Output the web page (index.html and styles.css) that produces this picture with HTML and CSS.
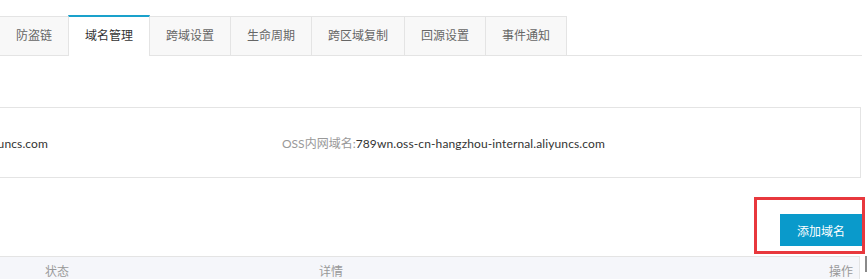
FILE: index.html
```html
<!DOCTYPE html>
<html lang="zh-CN">
<head>
<meta charset="utf-8">
<title>域名管理</title>
<link rel="stylesheet" href="styles.css">
</head>
<body>
<div class="page">
  <ul class="tabs">
    <li class="tab">防盗链</li>
    <li class="tab active">域名管理</li>
    <li class="tab">跨域设置</li>
    <li class="tab">生命周期</li>
    <li class="tab">跨区域复制</li>
    <li class="tab">回源设置</li>
    <li class="tab">事件通知</li>
  </ul>

  <div class="info">
    <div class="field field-first"><span class="label">OSS外网域名:</span><span class="value">789wn.oss-cn-hangzhou.aliyuncs.com</span></div>
    <div class="field"><span class="label">OSS内网域名:</span><span class="value">789wn.oss-cn-hangzhou-internal.aliyuncs.com</span></div>
  </div>

  <div class="toolbar">
    <button class="btn">添加域名<span class="highlight"></span></button>
  </div>

  <div class="table-head">
    <span class="th">状态</span>
    <span class="th">详情</span>
    <span class="th th-right">操作</span>
  </div>
</div>
</body>
</html>
```

FILE: styles.css
```css
html, body {
  margin: 0;
  padding: 0;
  background: #fff;
  overflow: hidden;
}
body {
  font-family: Lato, "Noto Sans CJK SC", sans-serif;
  font-size: 12px;
  color: #333;
}
.page {
  padding: 16px 6px 0 0;
  position: relative;
}
.tabs {
  list-style: none;
  margin: 0 0 0 -1px;
  padding: 0 0 0 1px;
  display: flex;
  border-bottom: 1px solid #e4e4e4;
}
.tab {
  height: 38px;
  line-height: 38px;
  padding: 0 16px;
  margin-left: -1px;
  border: 1px solid #e4e4e4;
  border-bottom: none;
  background: #f8f8f8;
  color: #666;
  white-space: nowrap;
}
.tab.active {
  position: relative;
  z-index: 1;
  background: #fff;
  color: #333;
  border-top: 2px solid #1aa1cb;
  margin-top: -1px;
  margin-bottom: -1px;
  height: 39px;
}
.info {
  margin: 51px 1px 0 -300px;
  height: 69px;
  border: 1px solid #e4e4e4;
  display: grid;
  grid-template-columns: 327px 1fr;
  column-gap: 234px;
  align-items: center;
  padding: 0 20px;
}
.field {
  white-space: nowrap;
}
.field-first {
  text-align: right;
}
.label {
  color: #999;
}
.value {
  color: #333;
  letter-spacing: 0.12px;
}
.toolbar {
  margin-top: 36px;
  display: flex;
  justify-content: flex-end;
}
.btn {
  position: relative;
  width: 82px;
  height: 32px;
  border: none;
  background: #0a9acb;
  color: #fff;
  font-family: inherit;
  font-size: 12px;
  padding: 0;
  margin: 0;
}
.highlight {
  position: absolute;
  left: -26px;
  top: -17px;
  right: -3px;
  bottom: -8px;
  border: 3px solid #e8383d;
  pointer-events: none;
}
.table-head {
  position: relative;
  margin: 10px 2px 0 -10px;
  height: 40px;
  border-top: 1px solid #e4e4e4;
  border-right: 1px solid #e4e4e4;
  background: #f5f6fa;
  display: grid;
  grid-template-columns: 274px 1fr auto;
  padding: 7px 6px 0 55px;
  box-sizing: border-box;
  color: #999;
  line-height: 16px;
}
.table-head::after {
  content: "";
  position: absolute;
  right: -8px;
  top: -1px;
  width: 2px;
  height: 16px;
  background: #8a8a8a;
}
```
